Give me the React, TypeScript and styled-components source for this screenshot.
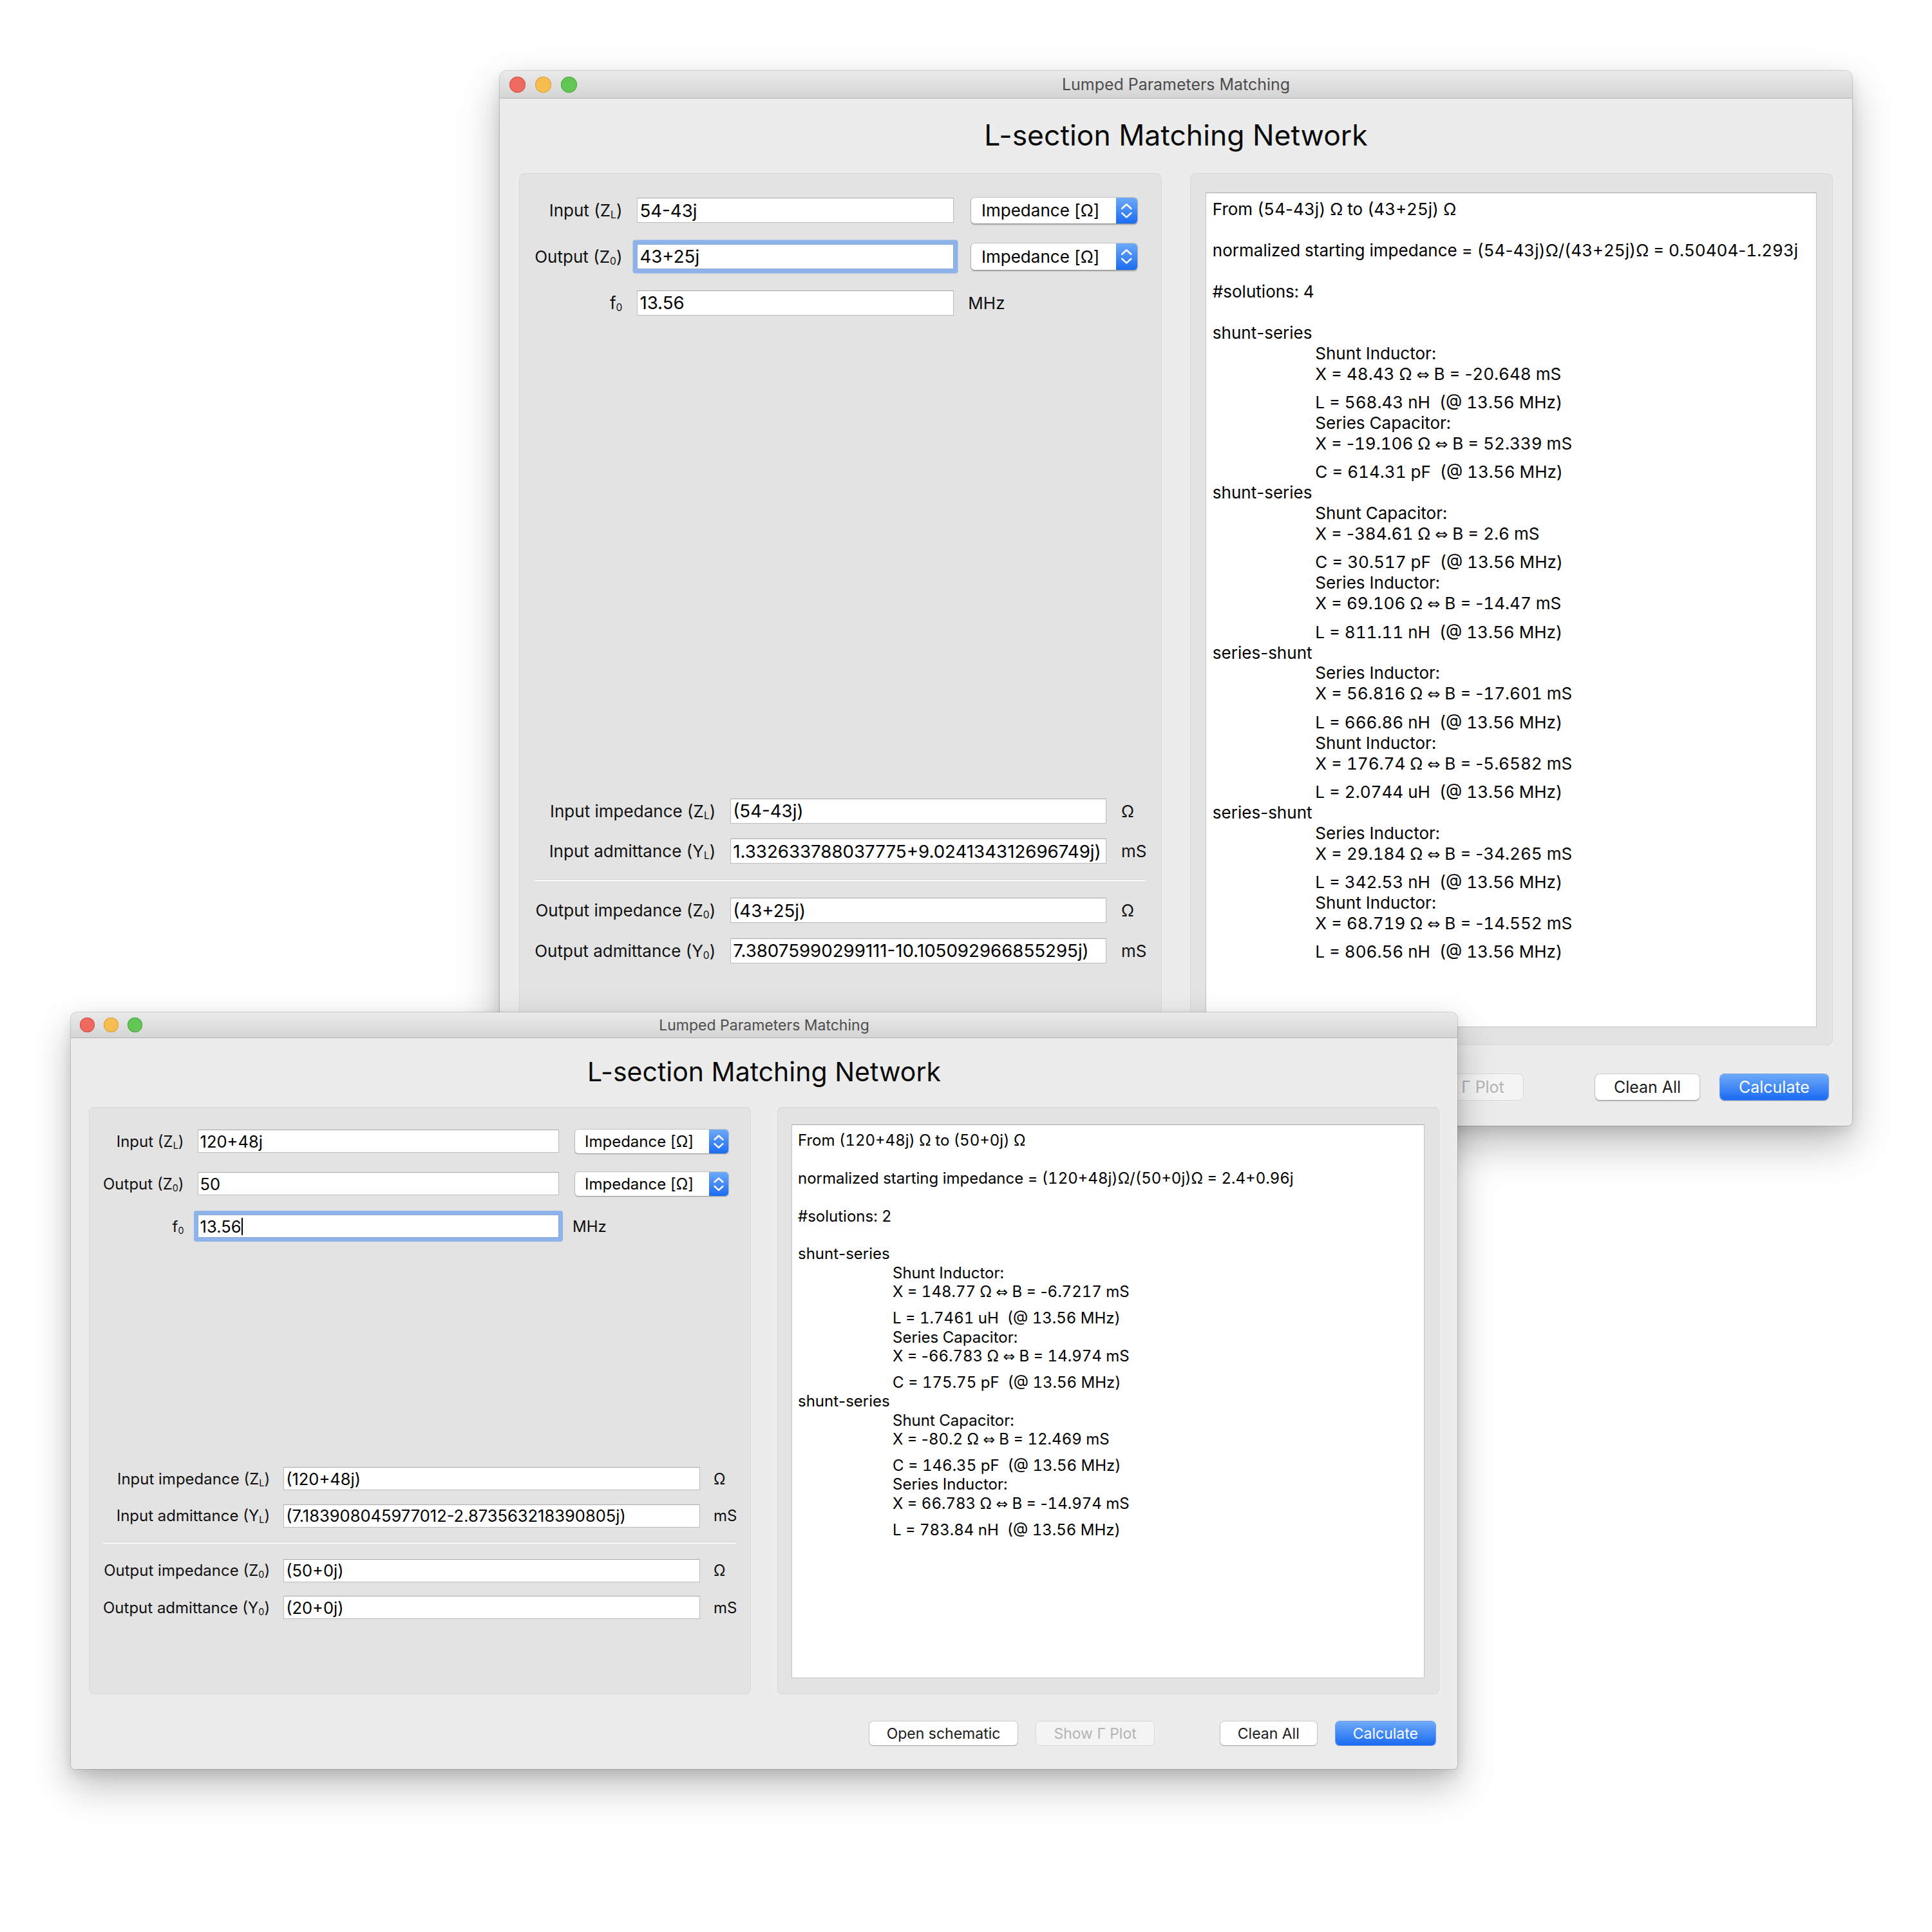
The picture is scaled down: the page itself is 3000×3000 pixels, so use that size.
import React from "react";
import styled, { createGlobalStyle, css } from "styled-components";

const FONT = `Inter, "Liberation Sans", "DejaVu Sans", sans-serif`;

const GlobalStyle = createGlobalStyle`
  html, body { margin: 0; padding: 0; background: #fff; }
  body { font-family: ${FONT}; color: #000; }
`;

type Part = [string, string, string];
type Solution = { kind: string; parts: Part[] };
type WindowData = {
  zoom: number;
  x: number;
  y: number;
  w: number;
  h: number;
  z: number;
  inputZ: string;
  outputZ: string;
  f0: string;
  focus: "output" | "f0";
  inZ: string;
  inY: string;
  outZ: string;
  outY: string;
  from: string;
  normalized: string;
  count: number;
  solutions: Solution[];
};

/* ---------- desktop & window frame ---------- */

const Desktop = styled.div`
  position: relative;
  width: 3000px;
  height: 3000px;
  background: #fff;
  overflow: hidden;
`;

const WindowSlot = styled.div<{ $x: number; $y: number; $z: number }>`
  position: absolute;
  left: ${(p) => p.$x}px;
  top: ${(p) => p.$y}px;
  z-index: ${(p) => p.$z};
`;

const Win = styled.div<{ $w: number; $h: number; $zoom: number }>`
  zoom: ${(p) => p.$zoom};
  width: ${(p) => p.$w}px;
  height: ${(p) => p.$h}px;
  display: flex;
  flex-direction: column;
  background: #ececec;
  border-radius: 10px 10px 6px 6px;
  overflow: hidden;
  box-shadow: 0 0 0 1px rgba(0, 0, 0, 0.14), 0 26px 60px rgba(0, 0, 0, 0.26),
    0 8px 18px rgba(0, 0, 0, 0.1);
  font-family: ${FONT};
`;

const TitleBar = styled.div`
  flex: none;
  height: 40px;
  box-sizing: border-box;
  display: grid;
  grid-template-columns: 1fr auto 1fr;
  align-items: center;
  background: linear-gradient(#eaeaea, #d5d5d5);
  border-bottom: 1px solid #b3b3b3;
`;

const Lights = styled.div`
  display: flex;
  gap: 14px;
  padding-left: 14px;
`;

const Light = styled.span<{ $c: string; $b: string }>`
  width: 23px;
  height: 23px;
  border-radius: 50%;
  background: ${(p) => p.$c};
  box-shadow: inset 0 0 0 1px ${(p) => p.$b};
`;

const TitleText = styled.div`
  font-size: 23px;
  color: #4d4d4d;
  white-space: nowrap;
`;

const Body = styled.div`
  flex: 1;
  min-height: 0;
  display: flex;
  flex-direction: column;
  padding: 26px 28px 0;
`;

const Heading = styled.h1`
  margin: 0 0 29px;
  font-size: 41px;
  line-height: 52px;
  font-weight: 400;
  text-align: center;
  color: #0a0a0a;
`;

const Columns = styled.div`
  flex: 1;
  min-height: 0;
  display: grid;
  grid-template-columns: 1fr 1fr;
  column-gap: 41px;
`;

const GroupBox = styled.div`
  min-height: 0;
  display: flex;
  flex-direction: column;
  background: #e3e3e3;
  border: 1px solid #d9d9d9;
  border-top-color: #d4d4d4;
  border-radius: 8px;
`;

/* ---------- form ---------- */

const TopForm = styled.div`
  display: grid;
  grid-template-columns: auto 1fr 242px;
  grid-auto-rows: 40px;
  column-gap: 21px;
  row-gap: 26px;
  align-items: center;
  padding: 32px 34px 0 21px;
`;

const BottomForm = styled.div`
  margin-top: auto;
  display: grid;
  grid-template-columns: auto 1fr 35px;
  grid-template-rows: 36px 36px 6px 36px 36px;
  column-gap: 21px;
  row-gap: 21.5px;
  align-items: center;
  padding: 0 22px 116px 21px;
`;

const Label = styled.div`
  font-size: 24px;
  text-align: right;
  white-space: nowrap;
  color: #111;
`;

const Sub = styled.sub`
  font-size: 0.6em;
  vertical-align: -0.22em;
  line-height: 0;
`;

const Field = styled.div<{ $focus?: boolean }>`
  height: 36px;
  box-sizing: border-box;
  min-width: 0;
  display: flex;
  align-items: center;
  padding: 0 3px;
  background: #fff;
  border: 1px solid #bdbdbd;
  border-top-color: #a9a9a9;
  font-size: 25.5px;
  white-space: nowrap;
  overflow: hidden;
  color: #000;
  ${(p) =>
    p.$focus &&
    css`
      border-color: #86a9dc;
      border-radius: 1px;
      box-shadow: 0 0 0 6px #8eb3ea;
    `}
`;

const Caret = styled.span`
  display: inline-block;
  width: 2px;
  height: 27px;
  margin-left: 1px;
  background: #000;
`;

const Select = styled.div`
  justify-self: end;
  width: 238px;
  height: 37px;
  display: flex;
  background: #fff;
  border-radius: 5px;
  box-shadow: 0 0 0 1px rgba(0, 0, 0, 0.12), 0 1px 2px rgba(0, 0, 0, 0.28);
  overflow: hidden;
`;

const SelectText = styled.div`
  flex: 1;
  display: flex;
  align-items: center;
  padding-left: 15px;
  font-size: 24px;
  white-space: nowrap;
`;

const SelectArrows = styled.div`
  flex: none;
  width: 30px;
  display: flex;
  align-items: center;
  justify-content: center;
  background: linear-gradient(#6ca9f8, #1c6cf2);
`;

const Unit = styled.div`
  font-size: 24px;
  white-space: nowrap;
  color: #111;
`;

const Separator = styled.div`
  grid-column: 1 / -1;
  align-self: stretch;
  background: linear-gradient(
    to bottom,
    transparent 1px,
    #d1d1d1 1px,
    #d1d1d1 2px,
    #fbfbfb 2px,
    #fbfbfb 4px,
    transparent 4px
  );
`;

/* ---------- result area ---------- */

const ResultArea = styled.div`
  flex: 1;
  min-height: 0;
  margin: 26px 22px 24px 21px;
  padding: 9px 9px;
  background: #fff;
  border: 1px solid #c4c4c4;
  border-top-color: #a9a9a9;
  overflow: hidden;
  font-size: 24px;
  line-height: 29.4px;
  font-variant-numeric: tabular-nums;
  color: #000;
`;

const ResultLine = styled.div<{ $indent?: boolean; $tall?: boolean }>`
  white-space: pre;
  height: 29.4px;
  padding-left: ${(p) => (p.$indent ? 147 : 0)}px;
  margin-bottom: ${(p) => (p.$tall ? 11.6 : 0)}px;
`;

const Hyphen = styled.span`
  font-variant-numeric: normal;
  font-feature-settings: "tnum" 0;
`;

const Arrow = styled.span`
  font-family: "DejaVu Sans", sans-serif;
  font-size: 0.92em;
  line-height: 0;
`;

/* ---------- buttons ---------- */

const ButtonBar = styled.div`
  flex: none;
  display: flex;
  justify-content: flex-end;
  align-items: center;
  gap: 29px;
  padding: 42px 6px 37px 0;
`;

const Button = styled.div<{ $variant?: "default" | "primary" | "disabled"; $spaced?: boolean }>`
  height: 37px;
  box-sizing: border-box;
  display: flex;
  align-items: center;
  padding: 0 27px;
  border-radius: 6px;
  font-size: 23px;
  white-space: nowrap;
  margin-left: ${(p) => (p.$spaced ? 74 : 0)}px;
  ${(p) =>
    p.$variant === "primary"
      ? css`
          background: linear-gradient(#6eaaf9, #1a6bf2);
          color: #fff;
          box-shadow: 0 0 0 1px rgba(20, 95, 230, 0.55), 0 1px 1px rgba(0, 0, 0, 0.18);
        `
      : p.$variant === "disabled"
      ? css`
          background: #f4f4f4;
          color: #b4b4b4;
          box-shadow: 0 0 0 1px rgba(0, 0, 0, 0.08);
        `
      : css`
          background: #fff;
          color: #1b1b1b;
          box-shadow: 0 0 0 1px rgba(0, 0, 0, 0.13), 0 1px 1.5px rgba(0, 0, 0, 0.22);
        `}
`;

/* ---------- pieces ---------- */

const Chevrons = () => (
  <svg width="30" height="37" viewBox="0 0 30 37">
    <polyline
      points="8.5,15.5 15,9.5 21.5,15.5"
      fill="none"
      stroke="#fff"
      strokeWidth="2.4"
      strokeLinecap="round"
      strokeLinejoin="round"
    />
    <polyline
      points="8.5,22 15,28 21.5,22"
      fill="none"
      stroke="#fff"
      strokeWidth="2.4"
      strokeLinecap="round"
      strokeLinejoin="round"
    />
  </svg>
);

const ImpedanceSelect = () => (
  <Select>
    <SelectText>Impedance [Ω]</SelectText>
    <SelectArrows>
      <Chevrons />
    </SelectArrows>
  </Select>
);

const Txt = ({ s }: { s: string }) => {
  const chunks = s.split("-");
  return (
    <>
      {chunks.map((c, i) => (
        <React.Fragment key={i}>
          {i > 0 && <Hyphen>-</Hyphen>}
          {c}
        </React.Fragment>
      ))}
    </>
  );
};

const XLine = ({ text }: { text: string }) => {
  const [a, b] = text.split("⇔");
  return (
    <ResultLine $indent $tall>
      <Txt s={a} />
      <Arrow>⇔</Arrow>
      <Txt s={b} />
    </ResultLine>
  );
};

const Results = ({ d }: { d: WindowData }) => (
  <ResultArea>
    <ResultLine>
      <Txt s={d.from} />
    </ResultLine>
    <ResultLine> </ResultLine>
    <ResultLine>
      <Txt s={d.normalized} />
    </ResultLine>
    <ResultLine> </ResultLine>
    <ResultLine>#solutions: {d.count}</ResultLine>
    <ResultLine> </ResultLine>
    {d.solutions.map((s, i) => (
      <React.Fragment key={i}>
        <ResultLine>
          <Txt s={s.kind} />
        </ResultLine>
        {s.parts.map((p, j) => (
          <React.Fragment key={j}>
            <ResultLine $indent>{p[0]}</ResultLine>
            <XLine text={p[1]} />
            <ResultLine $indent>{p[2]}</ResultLine>
          </React.Fragment>
        ))}
      </React.Fragment>
    ))}
  </ResultArea>
);

const MatchWindow = ({ d }: { d: WindowData }) => (
  <WindowSlot $x={d.x} $y={d.y} $z={d.z}>
    <Win $w={d.w} $h={d.h} $zoom={d.zoom}>
      <TitleBar>
        <Lights>
          <Light $c="#ee6a5f" $b="#d4544a" />
          <Light $c="#f5be4f" $b="#d9a23f" />
          <Light $c="#62c655" $b="#4faa43" />
        </Lights>
        <TitleText>Lumped Parameters Matching</TitleText>
        <span />
      </TitleBar>
      <Body>
        <Heading>L-section Matching Network</Heading>
        <Columns>
          <GroupBox>
            <TopForm>
              <Label>
                Input (Z<Sub>L</Sub>)
              </Label>
              <Field>{d.inputZ}</Field>
              <ImpedanceSelect />
              <Label>
                Output (Z<Sub>0</Sub>)
              </Label>
              <Field $focus={d.focus === "output"}>{d.outputZ}</Field>
              <ImpedanceSelect />
              <Label>
                f<Sub>0</Sub>
              </Label>
              <Field $focus={d.focus === "f0"}>
                {d.f0}
                {d.focus === "f0" && <Caret />}
              </Field>
              <Unit>MHz</Unit>
            </TopForm>
            <BottomForm>
              <Label>
                Input impedance (Z<Sub>L</Sub>)
              </Label>
              <Field>{d.inZ}</Field>
              <Unit>Ω</Unit>
              <Label>
                Input admittance (Y<Sub>L</Sub>)
              </Label>
              <Field>{d.inY}</Field>
              <Unit>mS</Unit>
              <Separator />
              <Label>
                Output impedance (Z<Sub>0</Sub>)
              </Label>
              <Field>{d.outZ}</Field>
              <Unit>Ω</Unit>
              <Label>
                Output admittance (Y<Sub>0</Sub>)
              </Label>
              <Field>{d.outY}</Field>
              <Unit>mS</Unit>
            </BottomForm>
          </GroupBox>
          <GroupBox>
            <Results d={d} />
          </GroupBox>
        </Columns>
        <ButtonBar>
          <Button>Open schematic</Button>
          <Button $variant="disabled">Show Γ Plot</Button>
          <Button $spaced>Clean All</Button>
          <Button $variant="primary">Calculate</Button>
        </ButtonBar>
      </Body>
    </Win>
  </WindowSlot>
);

/* ---------- data ---------- */

const back: WindowData = {
  zoom: 1.085,
  x: 776,
  y: 110,
  w: 1935.5,
  h: 1510,
  z: 1,
  inputZ: "54-43j",
  outputZ: "43+25j",
  f0: "13.56",
  focus: "output",
  inZ: "(54-43j)",
  inY: "1.332633788037775+9.024134312696749j)",
  outZ: "(43+25j)",
  outY: "7.38075990299111-10.105092966855295j)",
  from: "From (54-43j) Ω to (43+25j) Ω",
  normalized: "normalized starting impedance = (54-43j)Ω/(43+25j)Ω = 0.50404-1.293j",
  count: 4,
  solutions: [
    {
      kind: "shunt-series",
      parts: [
        ["Shunt Inductor:", "X = 48.43 Ω ⇔ B = -20.648 mS", "L = 568.43 nH  (@ 13.56 MHz)"],
        ["Series Capacitor:", "X = -19.106 Ω ⇔ B = 52.339 mS", "C = 614.31 pF  (@ 13.56 MHz)"],
      ],
    },
    {
      kind: "shunt-series",
      parts: [
        ["Shunt Capacitor:", "X = -384.61 Ω ⇔ B = 2.6 mS", "C = 30.517 pF  (@ 13.56 MHz)"],
        ["Series Inductor:", "X = 69.106 Ω ⇔ B = -14.47 mS", "L = 811.11 nH  (@ 13.56 MHz)"],
      ],
    },
    {
      kind: "series-shunt",
      parts: [
        ["Series Inductor:", "X = 56.816 Ω ⇔ B = -17.601 mS", "L = 666.86 nH  (@ 13.56 MHz)"],
        ["Shunt Inductor:", "X = 176.74 Ω ⇔ B = -5.6582 mS", "L = 2.0744 uH  (@ 13.56 MHz)"],
      ],
    },
    {
      kind: "series-shunt",
      parts: [
        ["Series Inductor:", "X = 29.184 Ω ⇔ B = -34.265 mS", "L = 342.53 nH  (@ 13.56 MHz)"],
        ["Shunt Inductor:", "X = 68.719 Ω ⇔ B = -14.552 mS", "L = 806.56 nH  (@ 13.56 MHz)"],
      ],
    },
  ],
};

const front: WindowData = {
  zoom: 1,
  x: 110,
  y: 1572,
  w: 2153,
  h: 1175,
  z: 2,
  inputZ: "120+48j",
  outputZ: "50",
  f0: "13.56",
  focus: "f0",
  inZ: "(120+48j)",
  inY: "(7.183908045977012-2.873563218390805j)",
  outZ: "(50+0j)",
  outY: "(20+0j)",
  from: "From (120+48j) Ω to (50+0j) Ω",
  normalized: "normalized starting impedance = (120+48j)Ω/(50+0j)Ω = 2.4+0.96j",
  count: 2,
  solutions: [
    {
      kind: "shunt-series",
      parts: [
        ["Shunt Inductor:", "X = 148.77 Ω ⇔ B = -6.7217 mS", "L = 1.7461 uH  (@ 13.56 MHz)"],
        ["Series Capacitor:", "X = -66.783 Ω ⇔ B = 14.974 mS", "C = 175.75 pF  (@ 13.56 MHz)"],
      ],
    },
    {
      kind: "shunt-series",
      parts: [
        ["Shunt Capacitor:", "X = -80.2 Ω ⇔ B = 12.469 mS", "C = 146.35 pF  (@ 13.56 MHz)"],
        ["Series Inductor:", "X = 66.783 Ω ⇔ B = -14.974 mS", "L = 783.84 nH  (@ 13.56 MHz)"],
      ],
    },
  ],
};

export default function App() {
  return (
    <>
      <GlobalStyle />
      <Desktop>
        <MatchWindow d={back} />
        <MatchWindow d={front} />
      </Desktop>
    </>
  );
}
